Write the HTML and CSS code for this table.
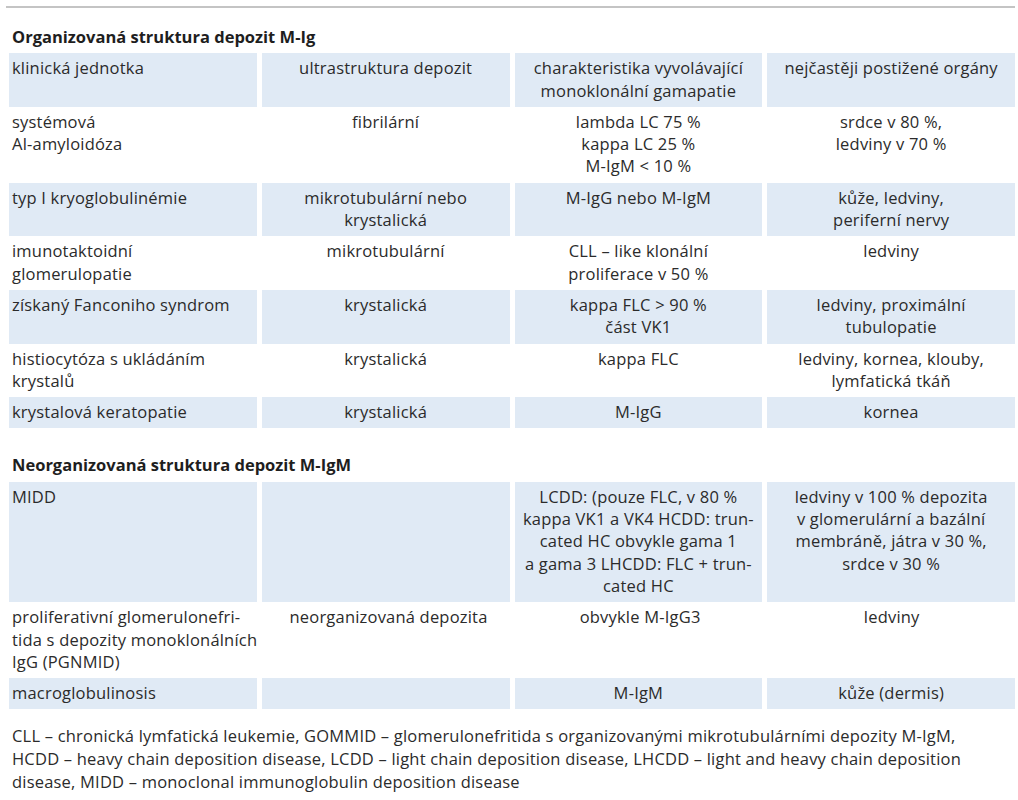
FILE: index.html
```html
<!DOCTYPE html>
<html lang="cs">
<head>
<meta charset="utf-8">
<link rel="stylesheet" href="styles.css">
</head>
<body>
<div class="page">
  <div class="rule"></div>

  <div class="section-title first">Organizovaná struktura depozit M-Ig</div>
  <div class="row shade">
    <div class="cell left">klinická jednotka</div>
    <div class="cell">ultrastruktura depozit</div>
    <div class="cell">charakteristika vyvolávající<br>monoklonální gamapatie</div>
    <div class="cell">nejčastěji postižené orgány</div>
  </div>
  <div class="row">
    <div class="cell left">systémová<br>Al-amyloidóza</div>
    <div class="cell">fibrilární</div>
    <div class="cell">lambda LC 75 %<br>kappa LC 25 %<br>M-IgM &lt; 10 %</div>
    <div class="cell">srdce v 80 %,<br>ledviny v 70 %</div>
  </div>
  <div class="row shade">
    <div class="cell left">typ I kryoglobulinémie</div>
    <div class="cell">mikrotubulární nebo<br>krystalická</div>
    <div class="cell">M-IgG nebo M-IgM</div>
    <div class="cell">kůže, ledviny,<br>periferní nervy</div>
  </div>
  <div class="row">
    <div class="cell left">imunotaktoidní<br>glomerulopatie</div>
    <div class="cell">mikrotubulární</div>
    <div class="cell">CLL – like klonální<br>proliferace v 50 %</div>
    <div class="cell">ledviny</div>
  </div>
  <div class="row shade">
    <div class="cell left">získaný Fanconiho syndrom</div>
    <div class="cell">krystalická</div>
    <div class="cell">kappa FLC &gt; 90 %<br>část VK1</div>
    <div class="cell">ledviny, proximální<br>tubulopatie</div>
  </div>
  <div class="row">
    <div class="cell left">histiocytóza s ukládáním<br>krystalů</div>
    <div class="cell">krystalická</div>
    <div class="cell">kappa FLC</div>
    <div class="cell">ledviny, kornea, klouby,<br>lymfatická tkáň</div>
  </div>
  <div class="row shade">
    <div class="cell left">krystalová keratopatie</div>
    <div class="cell">krystalická</div>
    <div class="cell">M-IgG</div>
    <div class="cell">kornea</div>
  </div>

  <div class="section-title second">Neorganizovaná struktura depozit M-IgM</div>
  <div class="row shade">
    <div class="cell left">MIDD</div>
    <div class="cell"></div>
    <div class="cell">LCDD: (pouze FLC, v 80 %<br>kappa VK1 a VK4 HCDD: trun-<br>cated HC obvykle gama 1<br>a gama 3 LHCDD: FLC + trun-<br>cated HC</div>
    <div class="cell">ledviny v 100 % depozita<br>v glomerulární a bazální<br>membráně, játra v 30 %,<br>srdce v 30 %</div>
  </div>
  <div class="row">
    <div class="cell left">proliferativní glomerulonefri-<br>tida s depozity monoklonálních<br>IgG (PGNMID)</div>
    <div class="cell">neorganizovaná depozita</div>
    <div class="cell">obvykle M-IgG3</div>
    <div class="cell">ledviny</div>
  </div>
  <div class="row shade">
    <div class="cell left">macroglobulinosis</div>
    <div class="cell"></div>
    <div class="cell">M-IgM</div>
    <div class="cell">kůže (dermis)</div>
  </div>

  <p class="note">CLL – chronická lymfatická leukemie, GOMMID – glomerulonefritida s organizovanými mikrotubulárními depozity M-IgM,<br>HCDD – heavy chain deposition disease, LCDD – light chain deposition disease, LHCDD – light and heavy chain deposition<br>disease, MIDD – monoclonal immunoglobulin deposition disease</p>
</div>
</body>
</html>
```

FILE: styles.css
```css
html, body {
  margin: 0;
  padding: 0;
  background: #ffffff;
}

body {
  font-family: "Open Sans", "Noto Sans", sans-serif;
  font-size: 16.5px;
  letter-spacing: 0.2px;
  line-height: 22.3px;
  color: #2b2b2b;
}

.page {
  width: 1006px;
  padding-left: 9px;
}

.rule {
  height: 2px;
  background: #c4c4c4;
  margin: 6px 0 0 -3px;
  width: 1009px;
}

.section-title {
  font-weight: 700;
  color: #1e1e1e;
  padding-left: 3px;
  padding-bottom: 5px;
  letter-spacing: 0;
}

.section-title.first {
  margin-top: 18px;
}

.section-title.second {
  margin-top: 26px;
}

.row {
  display: grid;
  grid-template-columns: repeat(4, 1fr);
  column-gap: 5px;
}

.cell {
  padding: 4px 3px 5px;
  text-align: center;
  white-space: nowrap;
}

.cell.left {
  text-align: left;
}

.row.shade .cell {
  background: #e0eaf5;
}

.note {
  margin: 16px 0 0;
  padding-left: 3px;
  line-height: 22.6px;
  white-space: nowrap;
}
```
